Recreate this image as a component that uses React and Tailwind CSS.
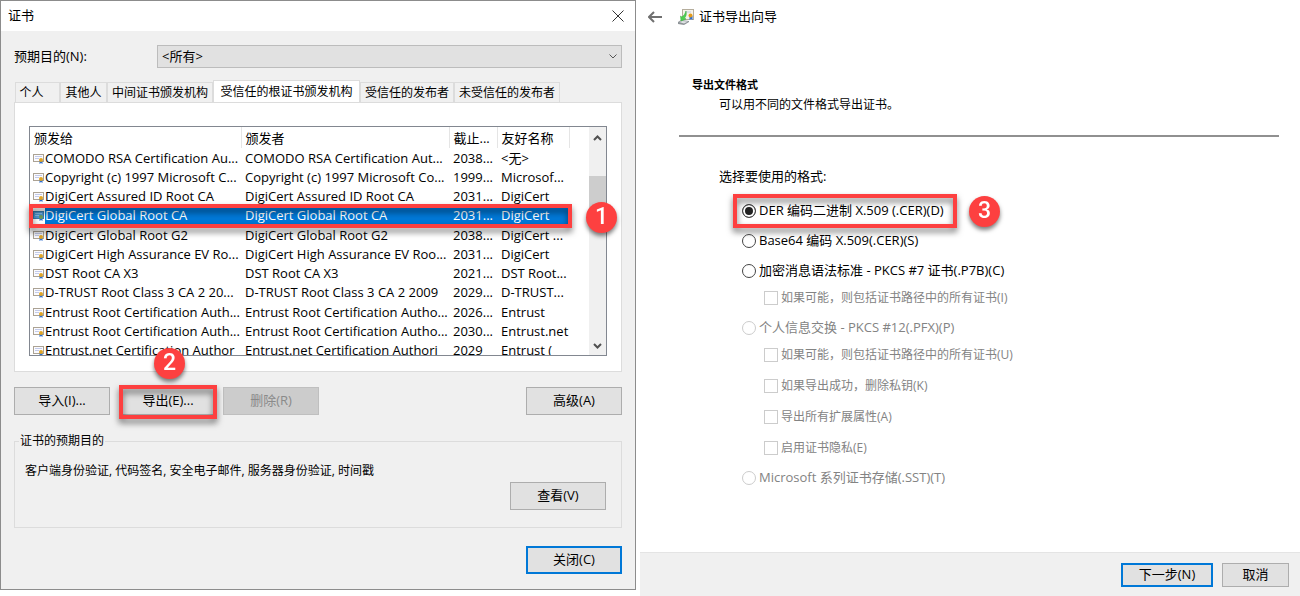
import React, { useState } from 'react';
import clsx from 'clsx';

const tabs = [
    { label: '个人', width: 'w-[45px] pr-3' },
    { label: '其他人', width: 'w-[47px]' },
    { label: '中间证书颁发机构', width: 'w-[106px]' },
    { label: '受信任的根证书颁发机构', width: 'w-[147px]' },
    { label: '受信任的发布者', width: 'w-[94px]' },
    { label: '未受信任的发布者', width: 'w-[106px]' },
];

const certificates = [
    { to: 'COMODO RSA Certification Au...', by: 'COMODO RSA Certification Aut...', date: '2038...', name: '<无>' },
    { to: 'Copyright (c) 1997 Microsoft C...', by: 'Copyright (c) 1997 Microsoft Co...', date: '1999...', name: 'Microsof...' },
    { to: 'DigiCert Assured ID Root CA', by: 'DigiCert Assured ID Root CA', date: '2031...', name: 'DigiCert' },
    { to: 'DigiCert Global Root CA', by: 'DigiCert Global Root CA', date: '2031...', name: 'DigiCert' },
    { to: 'DigiCert Global Root G2', by: 'DigiCert Global Root G2', date: '2038...', name: 'DigiCert ...' },
    { to: 'DigiCert High Assurance EV Ro...', by: 'DigiCert High Assurance EV Roo...', date: '2031...', name: 'DigiCert' },
    { to: 'DST Root CA X3', by: 'DST Root CA X3', date: '2021...', name: 'DST Root...' },
    { to: 'D-TRUST Root Class 3 CA 2 20...', by: 'D-TRUST Root Class 3 CA 2 2009', date: '2029...', name: 'D-TRUST...' },
    { to: 'Entrust Root Certification Auth...', by: 'Entrust Root Certification Autho...', date: '2026...', name: 'Entrust' },
    { to: 'Entrust Root Certification Auth...', by: 'Entrust Root Certification Autho...', date: '2030...', name: 'Entrust.net' },
    { to: 'Entrust.net Certification Author', by: 'Entrust.net Certification Authori', date: '2029', name: 'Entrust (' },
];

const formats = [
    { id: 'der', label: 'DER 编码二进制 X.509 (.CER)(D)', marked: true },
    { id: 'base64', label: 'Base64 编码 X.509(.CER)(S)' },
    { id: 'p7b', label: '加密消息语法标准 - PKCS #7 证书(.P7B)(C)', options: ['如果可能，则包括证书路径中的所有证书(I)'] },
    {
        id: 'pfx',
        label: '个人信息交换 - PKCS #12(.PFX)(P)',
        disabled: true,
        options: [
            '如果可能，则包括证书路径中的所有证书(U)',
            '如果导出成功，删除私钥(K)',
            '导出所有扩展属性(A)',
            '启用证书隐私(E)',
        ],
    },
    { id: 'sst', label: 'Microsoft 系列证书存储(.SST)(T)', disabled: true },
];

const CertIcon = ({ selected }) => (
    <svg viewBox="0 0 12 12" className="w-3 h-3 shrink-0" aria-hidden="true">
        <rect x="0.5" y="2.5" width="10" height="7" fill={selected ? '#4f9ad6' : '#fbfbff'} stroke={selected ? '#3b7fae' : '#aba294'} />
        <path d="M2 4.5h7M2 6.5h4" stroke={selected ? '#8cc0e6' : '#c3cbea'} />
        <path d="M6.500 9v3l1.500-1 1.500 1V9z" fill="#2f6fd0" />
        <circle cx="8" cy="8" r="2" fill={selected ? '#6f9c5a' : '#e0a526'} />
    </svg>
);

const WizardIcon = () => (
    <svg viewBox="0 0 16 16" className="w-4 h-4" aria-hidden="true">
        <rect x="4.5" y="0.5" width="11" height="10" fill="#f6f3ea" stroke="#b5ad9c" />
        <path d="M7 3h6" stroke="#c3cbe4" />
        <path d="M11.500 7v4l1.500-1 1.500 1V7z" fill="#2f6fd0" />
        <circle cx="12.500" cy="6.500" r="2" fill="#e39b1d" />
        <path d="M0 13l3-2 8 1v1l-5 3-6-1z" fill="#8e9498" />
        <path d="M1 13l3-1 6 .5-4 2z" fill="#dfe2e4" />
        <path d="M8 2c1 4-.5 6-1.500 7l1.500 1-5 2-.5-5 1.500 1C6 6.500 7 5 8 2z" fill="#4ecf52" stroke="#38ab3d" strokeWidth="0.5" />
    </svg>
);

const Badge = ({ children, className }) => (
    <span className={clsx('absolute flex items-center justify-center w-[31px] h-[31px] rounded-full bg-[#fd4040] text-white text-[23px] font-medium font-[Roboto] drop-shadow-[0_3px_2px_rgba(0,0,0,0.5)]', className)}>
        {children}
    </span>
);

// Red frame that marks the step, it throws its shadow inwards as well
const Frame = ({ className }) => (
    <span className={clsx('absolute border-4 border-[#fd4040] drop-shadow-[0_4px_3px_rgba(0,0,0,0.55)] pointer-events-none', className)} />
);

const Button = ({ children, primary, disabled, className }) => (
    <button
        type="button"
        disabled={disabled}
        className={clsx(
            'flex items-center justify-center text-[13px]',
            primary ? 'border-2 border-[#0078d7] bg-[#e1e1e1]' : 'border',
            !primary && (disabled ? 'border-[#bfbfbf] bg-[#cccccc] text-[#8a8a8a]' : 'border-[#adadad] bg-[#e1e1e1]'),
            className
        )}
    >
        {children}
    </button>
);

const CertificateTable = ({ selected, onSelect }) => (
    <table className="w-full table-fixed h-[233px] text-[13px] leading-[18px] text-left whitespace-nowrap">
        <thead>
            <tr className="h-[21px]">
                <th className="w-[211px] pl-1 font-normal border-r border-[#e5e5e5]">颁发给</th>
                <th className="w-[208px] pl-1 font-normal border-r border-[#e5e5e5]">颁发者</th>
                <th className="w-[48px] pl-1 font-normal border-r border-[#e5e5e5]">截止...</th>
                <th className="w-[72px] pl-1 font-normal border-r border-[#e5e5e5]">友好名称</th>
                <th></th>
            </tr>
        </thead>
        <tbody>
            {certificates.map((cert, i) => (
                <tr key={i} onClick={() => onSelect(i)} className={clsx(i === selected && 'text-white')}>
                    <td className="pl-[3px] overflow-hidden">
                        <div className="flex items-center">
                            <CertIcon selected={i === selected} />
                            <span className={clsx('grow', i === selected && 'bg-[#0078d7]')}>{cert.to}</span>
                        </div>
                    </td>
                    <td className={clsx('pl-1 overflow-hidden', i === selected && 'bg-[#0078d7]')}>{cert.by}</td>
                    <td className={clsx('pl-1 overflow-hidden', i === selected && 'bg-[#0078d7]')}>{cert.date}</td>
                    <td className={clsx('pl-1 overflow-hidden', i === selected && 'bg-[#0078d7]')}>{cert.name}</td>
                    <td></td>
                </tr>
            ))}
        </tbody>
    </table>
);

const CertificatesDialog = () => {
    const [activeTab, setActiveTab] = useState(3);
    const [selected, setSelected] = useState(3);

    return (
        <section className="self-start border border-[#8c8c8c] bg-[#f0f0f0] text-[13px]">
            <header className="flex items-center justify-between h-[30px] pl-[7px] pr-[11px] bg-white">
                <h1>证书</h1>
                <button type="button" aria-label="关闭">
                    <svg viewBox="0 0 12 12" className="w-3 h-3" fill="none" stroke="#333"><path d="M0.500 0.500l11 11M11.500 0.500l-11 11" /></svg>
                </button>
            </header>

            <div className="px-[13px] pt-[14px] pb-[15px]">
                <div className="flex items-center">
                    <label htmlFor="purpose" className="w-[143px]">预期目的(N):</label>
                    <div className="relative grow">
                        <select id="purpose" className="block w-full h-[23px] pl-1 appearance-none border border-[#bcbcbc] bg-[#e1e1e1] text-[13px]">
                            <option>&lt;所有&gt;</option>
                        </select>
                        <svg viewBox="0 0 8 5" className="absolute right-[5px] top-[9px] w-2 h-[5px]" fill="none" stroke="#555"><path d="M0.500 0.500L4 4l3.500-3.500" /></svg>
                    </div>
                </div>

                <div role="tablist" className="flex items-end h-[22px] mt-[12px] px-px">
                    {tabs.map((tab, i) => (
                        <button
                            key={tab.label}
                            type="button"
                            role="tab"
                            aria-selected={i === activeTab}
                            onClick={() => setActiveTab(i)}
                            className={clsx(
                                'border border-b-0 border-[#dcdcdc] whitespace-nowrap text-[12px]',
                                i === activeTab ? 'h-[22px] bg-white' : 'h-[20px]',
                                tab.width
                            )}
                        >
                            {tab.label}
                        </button>
                    ))}
                </div>

                <div className="px-[14px] pt-[23px] pb-[15px] border border-[#dcdcdc] bg-white">
                    <div className="relative">
                        <div className="flex h-[230px] overflow-hidden border border-[#828790] bg-white">
                            <div className="grow min-w-0">
                                <CertificateTable selected={selected} onSelect={setSelected} />
                            </div>
                            <div className="flex flex-col items-center shrink-0 w-[17px] bg-[#f0f0f0]">
                                <svg viewBox="0 0 9 6" className="w-[9px] h-[6px] my-2" fill="none" stroke="#505050" strokeWidth="2"><path d="M1 5l3.500-3.500L8 5" /></svg>
                                <div className="w-full h-[40px] mt-[27px] bg-[#cdcdcd]" />
                                <svg viewBox="0 0 9 6" className="w-[9px] h-[6px] mt-auto mb-[6px]" fill="none" stroke="#505050" strokeWidth="2"><path d="M1 1l3.500 3.500L8 1" /></svg>
                            </div>
                        </div>
                        <Frame className="left-0 right-[35px] top-[78px] h-[24px]" />
                        <Badge className="right-[-10px] top-[76px]">1</Badge>
                        <Badge className="left-[125px] top-[222px]">2</Badge>
                    </div>
                </div>

                <div className="flex mt-[15px]">
                    <Button className="w-[96px] h-[28px]">导入(I)...</Button>
                    <div className="relative ml-[10px]">
                        <Button className="w-[96px] h-[28px]">导出(E)...</Button>
                        <Frame className="-left-px -right-px -top-[2px] -bottom-[4px]" />
                    </div>
                    <Button disabled className="w-[96px] h-[28px] ml-[7px]">删除(R)</Button>
                    <Button className="w-[96px] h-[28px] ml-auto">高级(A)</Button>
                </div>

                <fieldset className="mt-[17px] pl-[10px] pr-[15px] border border-[#dcdcdc]">
                    <legend className="-ml-[6px] px-px text-[12px]">证书的预期目的</legend>
                    <p className="mt-[12px] text-[12px]">客户端身份验证, 代码签名, 安全电子邮件, 服务器身份验证, 时间戳</p>
                    <Button className="w-[96px] h-[28px] mt-[2px] mb-[17px] ml-auto">查看(V)</Button>
                </fieldset>

                <Button primary className="w-[96px] h-[28px] mt-[18px] ml-auto">关闭(C)</Button>
            </div>
        </section>
    );
};

const ExportWizard = () => {
    const [format, setFormat] = useState('der');

    return (
        <section className="flex flex-col ml-1 bg-white text-[13px]">
            <header className="flex items-center h-[33px] pl-2">
                <button type="button" aria-label="返回">
                    <svg viewBox="0 0 14 12" className="w-[14px] h-3" fill="none" stroke="#707070" strokeWidth="2"><path d="M1 6h13M6 1L1 6l5 5" /></svg>
                </button>
                <span className="ml-4"><WizardIcon /></span>
                <h1 className="ml-[5px]">证书导出向导</h1>
            </header>

            <div className="pl-[39px] pr-[21px] grow">
                <div className="pl-[13px] pt-[42px] pb-[20px] border-b-2 border-[#909090]">
                    <h2 className="text-[11px] leading-[20px] font-bold">导出文件格式</h2>
                    <p className="pl-[27px] text-[12px] leading-[20px]">可以用不同的文件格式导出证书。</p>
                </div>

                <fieldset className="pl-[40px] mt-[29px]">
                    <legend className="leading-[20px]">选择要使用的格式:</legend>
                    <ul className="flex flex-col gap-[10px] pl-[23px] pt-[15px]">
                        {formats.map((item) => (
                            <li key={item.id} className="relative">
                                <label className={clsx('flex items-center gap-[3px] h-[20px]', item.disabled && 'text-[#838383]')}>
                                    <input
                                        type="radio"
                                        name="format"
                                        checked={format === item.id}
                                        disabled={item.disabled}
                                        onChange={() => setFormat(item.id)}
                                        className="appearance-none w-[14px] h-[14px] rounded-full border border-[#444] disabled:border-[#cccccc] checked:shadow-[inset_0_0_0_2px_white] checked:bg-[#222]"
                                    />
                                    {item.label}
                                </label>
                                {item.options && (
                                    <div className="flex flex-col gap-[11px] mt-[7px] pl-[22px]">
                                        {item.options.map((option) => (
                                            <label key={option} className="flex items-center gap-[3px] h-[20px] text-[12px] text-[#838383]">
                                                <input type="checkbox" disabled className="appearance-none w-[14px] h-[14px] border border-[#cccccc]" />
                                                {option}
                                            </label>
                                        ))}
                                    </div>
                                )}
                                {item.marked && (
                                    <>
                                        <Frame className="-left-[9px] -top-[7px] w-[224px] h-[34px]" />
                                        <Badge className="left-[227px] -top-[5px]">3</Badge>
                                    </>
                                )}
                            </li>
                        ))}
                    </ul>
                </fieldset>
            </div>

            <footer className="flex items-center justify-end gap-[9px] h-[44px] pr-[11px] border-t border-[#e4e4e4] bg-[#f0f0f0]">
                <Button primary className="w-[92px] h-[24px]">下一步(N)</Button>
                <Button className="w-[67px] h-[24px]">取消</Button>
            </footer>
        </section>
    );
};

const App = () => (
    <main className="grid grid-cols-[636fr_664fr] min-h-screen bg-white text-black font-['Open_Sans','Noto_Sans_CJK_SC',sans-serif]">
        <CertificatesDialog />
        <ExportWizard />
    </main>
);

export default App;
